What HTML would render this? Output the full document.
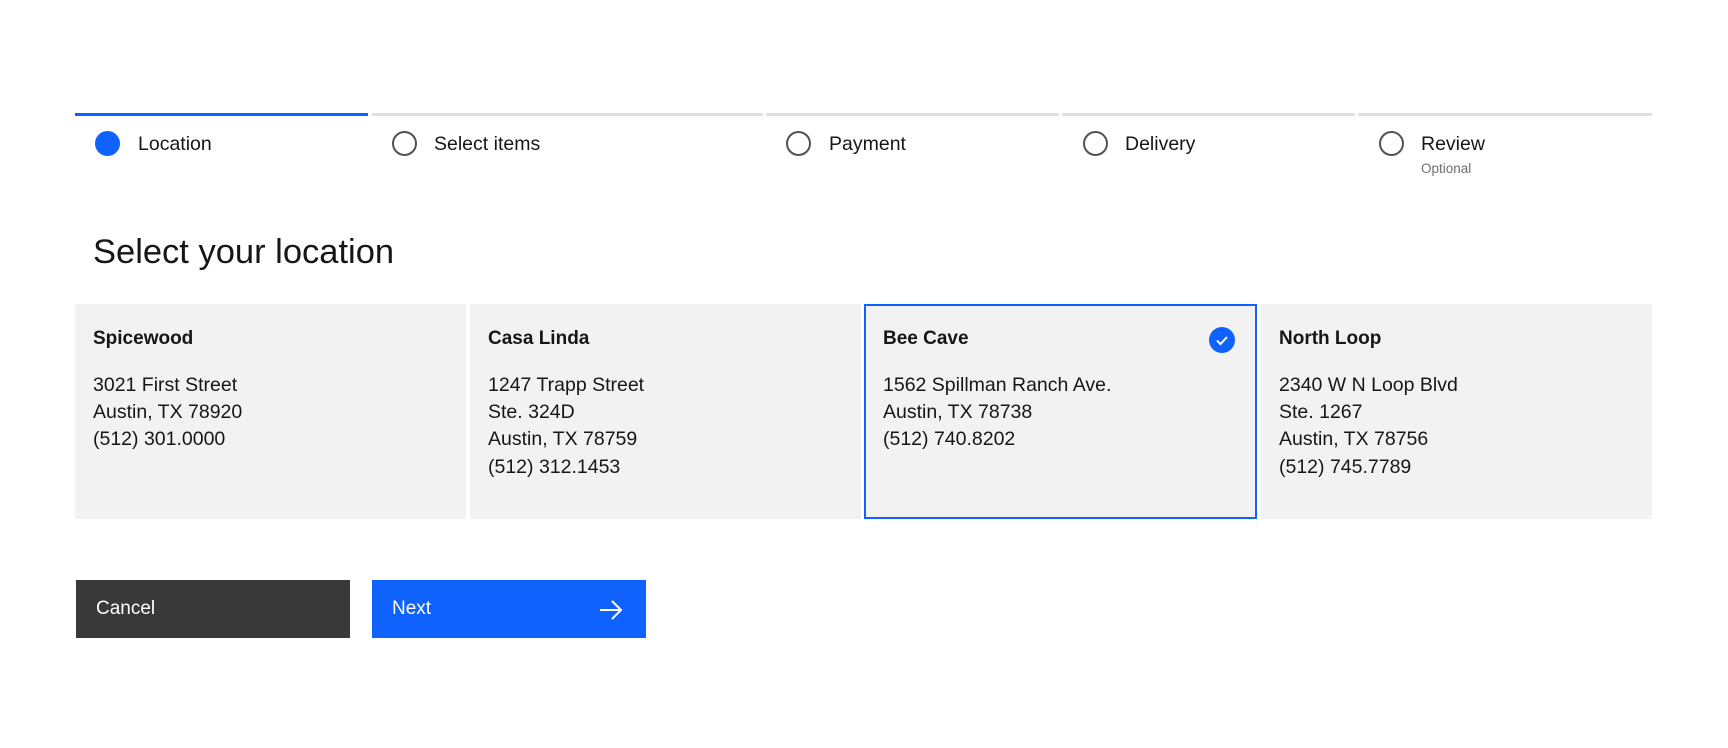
<!DOCTYPE html>
<html><head><style>
body{margin:0;width:1728px;height:748px;background:#fff;font-family:"Liberation Sans",sans-serif;color:#161616;position:relative;overflow:hidden}
.a{position:absolute}
.line{position:absolute;top:113px;height:3px;background:#e0e0e0}
.circ{position:absolute;top:131px;width:21px;height:21px;border:2px solid #525252;border-radius:50%}
.lab{position:absolute;top:133px;font-size:19.5px}
.card{position:absolute;top:304px;height:215px;width:391px;background:#f2f2f2;box-sizing:border-box;padding:24px 18px}
.card b{display:block;font-size:19px;margin-bottom:22px}
.card div{font-size:19.5px;line-height:27.2px}
.btn{position:absolute;top:580px;height:58px;width:274px;color:#fff;font-size:19px;box-sizing:border-box;padding:18px 20px}
</style></head><body>
<div class="line" style="left:75px;width:293px;background:#0f62fe"></div>
<div class="line" style="left:372px;width:391px"></div>
<div class="line" style="left:766px;width:293px"></div>
<div class="line" style="left:1062px;width:293px"></div>
<div class="line" style="left:1358px;width:294px"></div>
<div class="circ" style="left:95px;background:#0f62fe;border-color:#0f62fe"></div>
<div class="lab" style="left:138px">Location</div>
<div class="circ" style="left:392px"></div>
<div class="lab" style="left:434px">Select items</div>
<div class="circ" style="left:786px"></div>
<div class="lab" style="left:829px">Payment</div>
<div class="circ" style="left:1083px"></div>
<div class="lab" style="left:1125px">Delivery</div>
<div class="circ" style="left:1379px"></div>
<div class="lab" style="left:1421px">Review</div>
<div class="a" style="left:1421px;top:161px;font-size:13.5px;color:#6f6f6f">Optional</div>
<div class="a" style="left:93px;top:233px;font-size:34.5px">Select your location</div>
<div class="card" style="left:75px"><b>Spicewood</b><div>3021 First Street<br>Austin, TX 78920<br>(512) 301.0000</div></div>
<div class="card" style="left:470px"><b>Casa Linda</b><div>1247 Trapp Street<br>Ste. 324D<br>Austin, TX 78759<br>(512) 312.1453</div></div>
<div class="card" style="left:864px;width:393px;border:2px solid #0f62fe;padding:22px 17px"><b>Bee Cave</b><div>1562 Spillman Ranch Ave.<br>Austin, TX 78738<br>(512) 740.8202</div>
<svg class="a" style="left:343px;top:21px" width="26" height="26" viewBox="0 0 26 26"><circle cx="13" cy="13" r="13" fill="#0f62fe"/><path d="M8 13.5l3.5 3.5 6.5-7" stroke="#fff" stroke-width="2" fill="none"/></svg></div>
<div class="card" style="left:1261px"><b>North Loop</b><div>2340 W N Loop Blvd<br>Ste. 1267<br>Austin, TX 78756<br>(512) 745.7789</div></div>
<div class="btn" style="left:76px;background:#393939">Cancel</div>
<div class="btn" style="left:372px;background:#0f62fe">Next
<svg class="a" style="left:227px;top:19px" width="24" height="22" viewBox="0 0 24 22"><path d="M1 11h21M13 2l9 9-9 9" stroke="#fff" stroke-width="2" fill="none"/></svg></div>
</body></html>
